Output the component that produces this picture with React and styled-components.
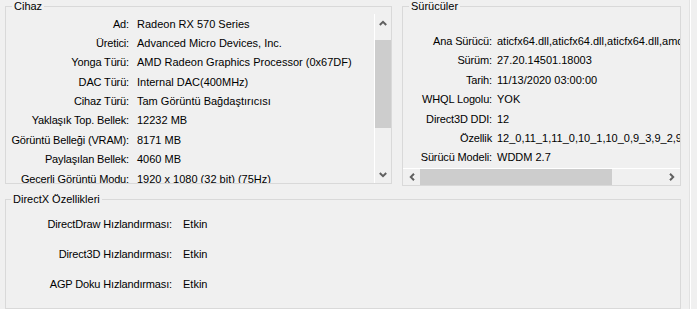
import React from "react";
import styled, { createGlobalStyle } from "styled-components";

const GlobalStyle = createGlobalStyle`
  html, body {
    margin: 0;
    padding: 0;
    background: #f0f0f0;
  }
  body {
    font-family: "Liberation Sans", Arial, sans-serif;
    font-size: 11px;
    color: #000;
    overflow: hidden;
  }
`;

const Window = styled.div`
  display: flex;
  width: 697px;
  height: 309px;
  background: #f0f0f0;
  overflow: hidden;
`;

const Main = styled.div`
  display: flex;
  flex-direction: column;
  align-items: flex-start;
  gap: 7px;
  padding-left: 5px;
  width: 676px;
  flex: none;
`;

const TopRow = styled.div`
  display: flex;
  align-items: flex-start;
  gap: 10px;
`;

const Group = styled.fieldset`
  margin: 0;
  padding: 1px 0 0 0;
  border: 1px solid #d9d9d9;
  width: ${(p) => p.$w}px;
  box-sizing: border-box;
  min-width: 0;
  display: flex;
`;

const Legend = styled.legend`
  margin-left: ${(p) => p.$ml ?? 6}px;
  padding: 0 2px;
  line-height: 13px;
  height: 13px;
  font-size: 11px;
`;

const ListView = styled.div`
  flex: 1;
  min-width: 0;
  height: ${(p) => p.$h}px;
  overflow: hidden;
  padding-top: ${(p) => p.$pt}px;
  box-sizing: border-box;
`;

const InfoGrid = styled.div`
  display: grid;
  grid-template-columns: ${(p) => p.$label}px max-content;
  column-gap: ${(p) => p.$gap}px;
  grid-auto-rows: ${(p) => p.$row}px;
  line-height: ${(p) => p.$row}px;
`;

const Label = styled.div`
  text-align: right;
  white-space: nowrap;
  letter-spacing: -0.15px;
`;

const Value = styled.div`
  white-space: nowrap;
`;

const VScroll = styled.div`
  width: 16px;
  flex: none;
  border-left: 1px solid #ffffff;
  display: flex;
  flex-direction: column;
  height: 169px;
`;

const HScroll = styled.div`
  height: 16px;
  flex: none;
  border-top: 1px solid #ffffff;
  display: flex;
`;

const ArrowBtn = styled.div`
  flex: none;
  width: ${(p) => (p.$horizontal ? "17px" : "16px")};
  height: ${(p) => (p.$horizontal ? "16px" : "17px")};
  display: flex;
  align-items: center;
  justify-content: center;
`;

const Track = styled.div`
  flex: 1;
  display: flex;
  flex-direction: ${(p) => (p.$horizontal ? "row" : "column")};
`;

const Thumb = styled.div`
  background: #cdcdcd;
  flex: none;
  ${(p) =>
    p.$horizontal
      ? `width: ${p.$size}px; height: 16px; margin-left: ${p.$offset}px;`
      : `height: ${p.$size}px; width: 16px; margin-top: ${p.$offset}px;`}
`;

const ChevronSvg = styled.svg`
  display: block;
  transform: rotate(${(p) => p.$rot}deg);
`;

const Chevron = ({ rot }) => (
  <ChevronSvg $rot={rot} width="8" height="6" viewBox="0 0 8 6">
    <polyline
      points="0.8,5 4,1.8 7.2,5"
      fill="none"
      stroke="#606060"
      strokeWidth="2"
    />
  </ChevronSvg>
);

const RightPane = styled.div`
  flex: 1;
  min-width: 0;
  display: flex;
  flex-direction: column;
`;

const DxBody = styled.div`
  flex: 1;
  height: 101px;
  padding-top: 2px;
  box-sizing: border-box;
`;

const Edge = styled.div`
  flex: none;
  margin-left: 8px;
  width: 1px;
  border-right: 1px solid #ffffff;
  background: #e2e2e2;
`;

const deviceRows = [
  ["Ad:", "Radeon RX 570 Series"],
  ["Üretici:", "Advanced Micro Devices, Inc."],
  ["Yonga Türü:", "AMD Radeon Graphics Processor (0x67DF)"],
  ["DAC Türü:", "Internal DAC(400MHz)"],
  ["Cihaz Türü:", "Tam Görüntü Bağdaştırıcısı"],
  ["Yaklaşık Top. Bellek:", "12232 MB"],
  ["Görüntü Belleği (VRAM):", "8171 MB"],
  ["Paylaşılan Bellek:", "4060 MB"],
  ["Geçerli Görüntü Modu:", "1920 x 1080 (32 bit) (75Hz)"],
];

const driverRows = [
  ["Ana Sürücü:", "aticfx64.dll,aticfx64.dll,aticfx64.dll,amdxc64.dll"],
  ["Sürüm:", "27.20.14501.18003"],
  ["Tarih:", "11/13/2020 03:00:00"],
  ["WHQL Logolu:", "YOK"],
  ["Direct3D DDI:", "12"],
  ["Özellik", "12_0,11_1,11_0,10_1,10_0,9_3,9_2,9_1"],
  ["Sürücü Modeli:", "WDDM 2.7"],
];

const dxRows = [
  ["DirectDraw Hızlandırması:", "Etkin"],
  ["Direct3D Hızlandırması:", "Etkin"],
  ["AGP Doku Hızlandırması:", "Etkin"],
];

const Rows = ({ rows }) =>
  rows.map(([l, v]) => (
    <React.Fragment key={l}>
      <Label>{l}</Label>
      <Value>{v}</Value>
    </React.Fragment>
  ));

export default function App() {
  return (
    <>
      <GlobalStyle />
      <Window>
        <Main>
          <TopRow>
            <Group $w={387}>
              <Legend>Cihaz</Legend>
              <ListView $h={169} $pt={0.5}>
                <InfoGrid $label={123} $gap={8} $row={19.4}>
                  <Rows rows={deviceRows} />
                </InfoGrid>
              </ListView>
              <VScroll>
                <ArrowBtn>
                  <Chevron rot={0} />
                </ArrowBtn>
                <Track>
                  <Thumb $size={88} $offset={9} />
                </Track>
                <ArrowBtn>
                  <Chevron rot={180} />
                </ArrowBtn>
              </VScroll>
            </Group>
            <Group $w={279}>
              <Legend>Sürücüler</Legend>
              <RightPane>
                <ListView $h={152} $pt={18}>
                  <InfoGrid $label={89} $gap={5} $row={19.4}>
                    <Rows rows={driverRows} />
                  </InfoGrid>
                </ListView>
                <HScroll>
                  <ArrowBtn $horizontal>
                    <Chevron rot={-90} />
                  </ArrowBtn>
                  <Track $horizontal>
                    <Thumb $horizontal $size={192} $offset={0} />
                  </Track>
                  <ArrowBtn $horizontal>
                    <Chevron rot={90} />
                  </ArrowBtn>
                </HScroll>
              </RightPane>
            </Group>
          </TopRow>
          <Group $w={676}>
            <Legend $ml={5}>DirectX Özellikleri</Legend>
            <DxBody>
              <InfoGrid $label={166} $gap={11} $row={30}>
                <Rows rows={dxRows} />
              </InfoGrid>
            </DxBody>
          </Group>
        </Main>
        <Edge />
      </Window>
    </>
  );
}
